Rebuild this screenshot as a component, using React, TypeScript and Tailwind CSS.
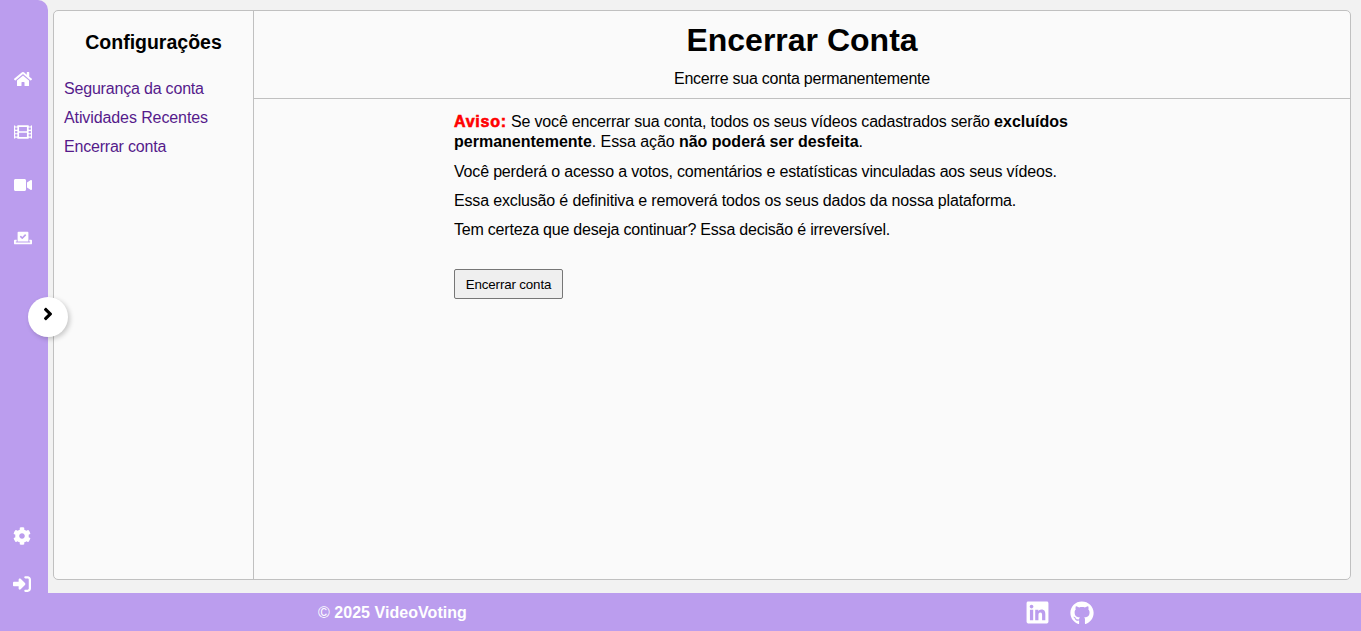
import type { ReactNode } from "react";
import { FaHome, FaFilm, FaVideo, FaVoteYea, FaCog, FaLinkedin, FaGithub, FaAngleRight } from "react-icons/fa";
import { FaRightToBracket } from "react-icons/fa6";

function NavItem({ children, label }: { children: ReactNode; label: string }) {
  return (
    <a href="#" aria-label={label} className="flex h-[53px] items-center justify-center">
      {children}
    </a>
  );
}

function Sidebar() {
  return (
    <nav className="relative flex w-12 shrink-0 flex-col justify-between rounded-tr-[10px] bg-[#bb9dee] text-white">
      <div className="w-[46px] pt-[52px]">
        <NavItem label="Início"><FaHome className="h-4 w-[18px]" /></NavItem>
        <NavItem label="Filmes"><FaFilm className="h-[18px] w-[18px]" /></NavItem>
        <NavItem label="Vídeos"><FaVideo className="h-[18px] w-[18px]" /></NavItem>
        <NavItem label="Votação"><FaVoteYea className="h-[18px] w-[18px]" /></NavItem>
      </div>
      <div className="flex w-11 flex-col items-center gap-[30px]">
        <FaCog className="h-[18px] w-[18px]" />
        <FaRightToBracket className="h-[18px] w-[18px]" />
      </div>
      <button
        aria-label="Expandir"
        className="absolute top-[297px] left-7 flex size-10 justify-center rounded-full bg-white pt-[7px] text-black shadow-[2px_2px_5px_rgba(0,0,0,0.2)]"
      >
        <FaAngleRight className="h-5 w-5" />
      </button>
    </nav>
  );
}

function SettingsMenu() {
  return (
    <aside className="w-[200px] shrink-0 border-r border-[#c0c0c0] px-[10px] pt-5">
      <h3 className="text-center text-[19.5px] leading-[22px] font-bold">Configurações</h3>
      <ul className="mt-[27px] flex flex-col gap-[11px] leading-[18px] text-[#551a8b]">
        <li className="tracking-[-0.19px]">Segurança da conta</li>
        <li className="tracking-[-0.1px]">Atividades Recentes</li>
        <li className="tracking-[-0.2px]">Encerrar conta</li>
      </ul>
    </aside>
  );
}

export default function App() {
  return (
    <div className="flex h-[631px] flex-col overflow-hidden bg-[#f2f2f2] font-['Liberation_Sans',Arial,sans-serif] text-base text-black">
      <div className="flex h-[593px]">
        <Sidebar />
        <main className="mt-[10px] mr-[10px] mb-[13px] ml-[5px] flex flex-1 rounded-[5px] border border-[#c0c0c0] bg-[#fafafa]">
          <SettingsMenu />
          <section className="flex-1">
            <header className="h-[88px] border-b border-[#c0c0c0] pt-[11px] text-center">
              <h1 className="text-[32px] leading-9 font-bold">Encerrar Conta</h1>
              <p className="mt-3 leading-[18px] tracking-[-0.25px]">Encerre sua conta permanentemente</p>
            </header>
            <div className="ml-[200px] w-[695px] pt-[13px]">
              <p className="leading-5 tracking-[-0.185px] whitespace-nowrap">
                <strong className="tracking-[0.75px] text-[red] [-webkit-text-stroke:0.6px_red]">Aviso:</strong> Se você encerrar sua conta, todos os seus vídeos cadastrados serão <strong className="tracking-normal">excluídos</strong>
                <br />
                <strong className="tracking-normal">permanentemente</strong><span className="tracking-[-0.08px]">. Essa ação </span><strong className="tracking-normal">não poderá ser desfeita</strong>.
              </p>
              <p className="mt-[11px] leading-[18px] tracking-[-0.18px]">Você perderá o acesso a votos, comentários e estatísticas vinculadas aos seus vídeos.</p>
              <p className="mt-[11px] leading-[18px] tracking-[-0.16px]">Essa exclusão é definitiva e removerá todos os seus dados da nossa plataforma.</p>
              <p className="mt-[11px] leading-[18px] tracking-[-0.21px]">Tem certeza que deseja continuar? Essa decisão é irreversível.</p>
              <button className="mt-[30px] block h-[30px] w-[109px] rounded-[2px] border border-[#767676] bg-[#efefef] pt-px text-[13.333px] tracking-[-0.14px]">Encerrar conta</button>
            </div>
          </section>
        </main>
      </div>
      <footer className="flex h-[38px] items-center justify-between bg-[#bb9dee] pt-[2px] pr-[267px] pl-[318px] text-white">
        <p>© <strong className="tracking-[0.05px]">2025 VideoVoting</strong></p>
        <div className="flex items-center gap-5">
          <FaLinkedin className="mb-px h-[25px] w-[25px]" />
          <FaGithub className="h-6 w-6" />
        </div>
      </footer>
    </div>
  );
}
